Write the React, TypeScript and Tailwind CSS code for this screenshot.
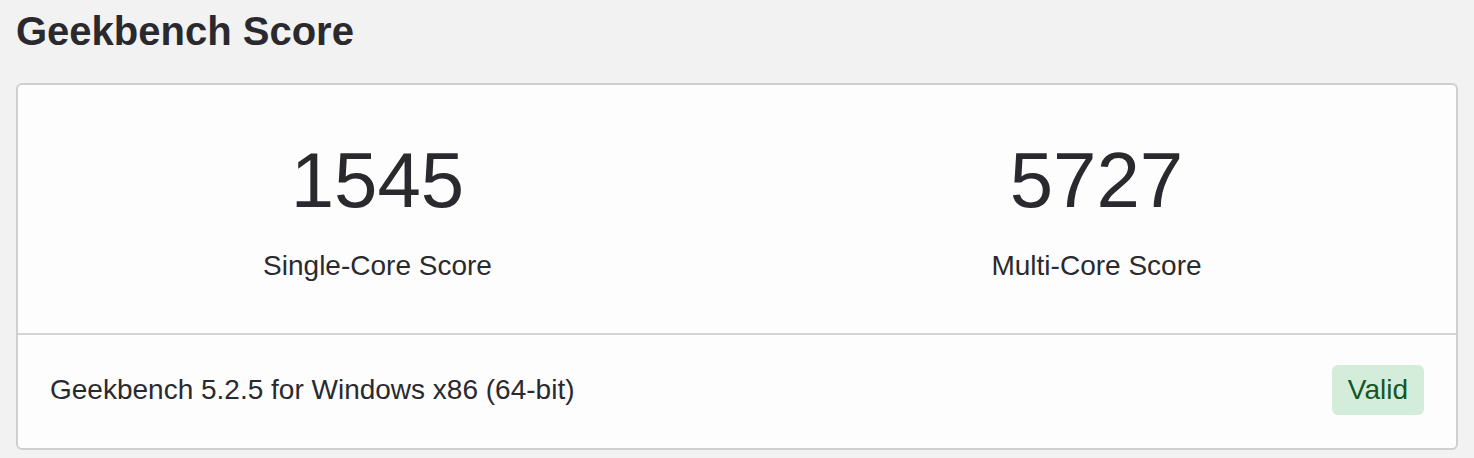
export default function App() {
  return (
    <div className="min-h-screen bg-[#f2f2f2] px-4 pt-[7px] font-['Liberation_Sans',Arial,sans-serif] text-[#2a2a2e]">
      <h1 className="text-[40px] font-bold leading-[48px]">Geekbench Score</h1>
      <div className="mt-[28px] rounded-md border-2 border-[#cfcfcf] bg-[#fdfdfd]">
        <div className="grid grid-cols-2 pb-[46px] pt-[52px] text-center">
          <div>
            <div className="text-[78px] leading-[86px]">1545</div>
            <div className="mt-[22px] text-[28px] leading-[42px]">Single-Core Score</div>
          </div>
          <div>
            <div className="text-[78px] leading-[86px]">5727</div>
            <div className="mt-[22px] text-[28px] leading-[42px]">Multi-Core Score</div>
          </div>
        </div>
        <div className="flex h-[115px] items-center justify-between border-t-2 border-[#d6d6d6] px-[32px] pb-[3px]">
          <span className="text-[28px] leading-[42px]">Geekbench 5.2.5 for Windows x86 (64-bit)</span>
          <span className="rounded-md bg-[#d4edda] px-4 py-1 text-[28px] leading-[42px] text-[#155724]">Valid</span>
        </div>
      </div>
    </div>
  );
}
